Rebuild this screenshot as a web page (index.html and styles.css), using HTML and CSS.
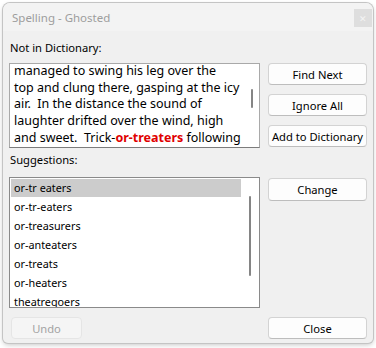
FILE: index.html
```html
<!DOCTYPE html>
<html>
<head>
<meta charset="utf-8">
<link rel="stylesheet" href="styles.css">
</head>
<body>
<div class="dialog">
  <div class="titlebar">
    <span class="title">Spelling - Ghosted</span>
    <span class="closebox">&#x2715;</span>
  </div>
  <div class="content">
    <div class="label label-top">Not in Dictionary:</div>
    <div class="spacer"></div>

    <div class="textbox">
      <div class="textlines">managed to swing his leg over the<br>top and clung there, gasping at the icy<br>air.&nbsp; In the distance the sound of<br>laughter drifted over the wind, high<br>and sweet.&nbsp; Trick-<span class="bad">or-treaters</span> following</div>
      <div class="vscroll text-scroll"><div class="thumb thumb-text"></div></div>
    </div>
    <div class="btnstack">
      <button class="btn">Find Next</button>
      <button class="btn">Ignore All</button>
      <button class="btn">Add to Dictionary</button>
    </div>

    <div class="label label-sugg">Suggestions:</div>
    <div class="spacer"></div>

    <div class="listbox">
      <ul class="items">
        <li class="sel">or-tr eaters</li>
        <li>or-tr-eaters</li>
        <li>or-treasurers</li>
        <li>or-anteaters</li>
        <li>or-treats</li>
        <li>or-heaters</li>
        <li>theatregoers</li>
      </ul>
      <div class="vscroll list-scroll"><div class="thumb thumb-list"></div></div>
    </div>
    <div class="btnstack">
      <button class="btn btn-change">Change</button>
    </div>

    <div class="bottom-left"><button class="btn btn-undo" disabled>Undo</button></div>
    <div class="bottom-right"><button class="btn">Close</button></div>
  </div>
</div>
</body>
</html>
```

FILE: styles.css
```css
html, body {
  margin: 0;
  padding: 0;
  width: 376px;
  height: 348px;
  overflow: hidden;
  background: #ffffff;
}

.dialog {
  position: absolute;
  left: 3px;
  top: 3px;
  width: 370px;
  height: 340px;
  background: #f0f0f0;
  border-radius: 7px 7px 5px 5px;
  box-shadow: 0 0 0 1px #c4c4c4, 0 2px 5px rgba(0,0,0,0.22);
  font-family: "Noto Sans", "Open Sans", sans-serif;
  font-size: 11.2px;
  color: #000;
  overflow: hidden;
}

.titlebar {
  height: 28px;
  background: #f3f3f3;
  display: flex;
  align-items: flex-start;
  justify-content: space-between;
  padding-left: 9px;
  padding-right: 1px;
}
.title {
  color: #9d9d9d;
  font-size: 11.5px;
  line-height: 16px;
  margin-top: 7px;
}
.closebox {
  width: 18px;
  height: 18px;
  background: #dedede;
  color: #f4f4f4;
  font-size: 9px;
  display: flex;
  align-items: center;
  justify-content: center;
  margin-top: 6px;
}

.content {
  display: grid;
  grid-template-columns: 251px 99px;
  grid-template-rows: 32px 85px 29px 131px 31px;
  column-gap: 8px;
  padding-left: 6px;
}

.label {
  white-space: nowrap;
  line-height: 15px;
  padding-left: 1px;
}
.label-top {
  padding-top: 9px;
}
.label-sugg {
  padding-top: 4px;
}

.textbox {
  background: #ffffff;
  border: 1px solid #a9a9a9;
  border-bottom-color: #7c7c7c;
  display: flex;
  overflow: hidden;
}
.textlines {
  flex: 1;
  font-size: 12.5px;
  line-height: 16.7px;
  padding-left: 4px;
  margin-top: -1px;
  white-space: nowrap;
  overflow: hidden;
}
.bad {
  color: #e00000;
  font-weight: bold;
}

.vscroll {
  position: relative;
}
.text-scroll {
  width: 17px;
}
.list-scroll {
  flex: 1;
}
.thumb {
  position: absolute;
  width: 2px;
  background: #858585;
  border-radius: 1px;
}
.thumb-text {
  left: 9px;
  top: 25px;
  height: 19px;
}
.thumb-list {
  left: 8px;
  top: 18px;
  height: 80px;
}

.btnstack {
  display: flex;
  flex-direction: column;
  gap: 9px;
}

.btn {
  font-family: "Noto Sans", "Open Sans", sans-serif;
  font-size: 11.2px;
  color: #000;
  background: #fdfdfd;
  border: 1px solid #d3d3d3;
  border-bottom-color: #bdbdbd;
  border-radius: 4px;
  height: 22px;
  width: 99px;
  padding: 0;
  margin: 0;
  white-space: nowrap;
}
.btn-change {
  height: 23px;
  margin-top: 1px;
}
.btn-undo {
  width: 71px;
  margin-left: 2px;
  color: #a3a3a3;
  background: #f5f5f5;
  border-color: #e5e5e5;
}

.listbox {
  background: #ffffff;
  border: 1px solid #8a8a8a;
  display: flex;
  overflow: hidden;
}
.items {
  list-style: none;
  margin: 0;
  padding: 1px 0 0 1px;
  width: 230px;
  font-size: 10.8px;
}
.items li {
  height: 18px;
  line-height: 18px;
  margin-bottom: 1px;
  padding-left: 3px;
  white-space: nowrap;
}
.items li.sel {
  background: #cccccc;
}

.bottom-left, .bottom-right {
  padding-top: 9px;
}
```
